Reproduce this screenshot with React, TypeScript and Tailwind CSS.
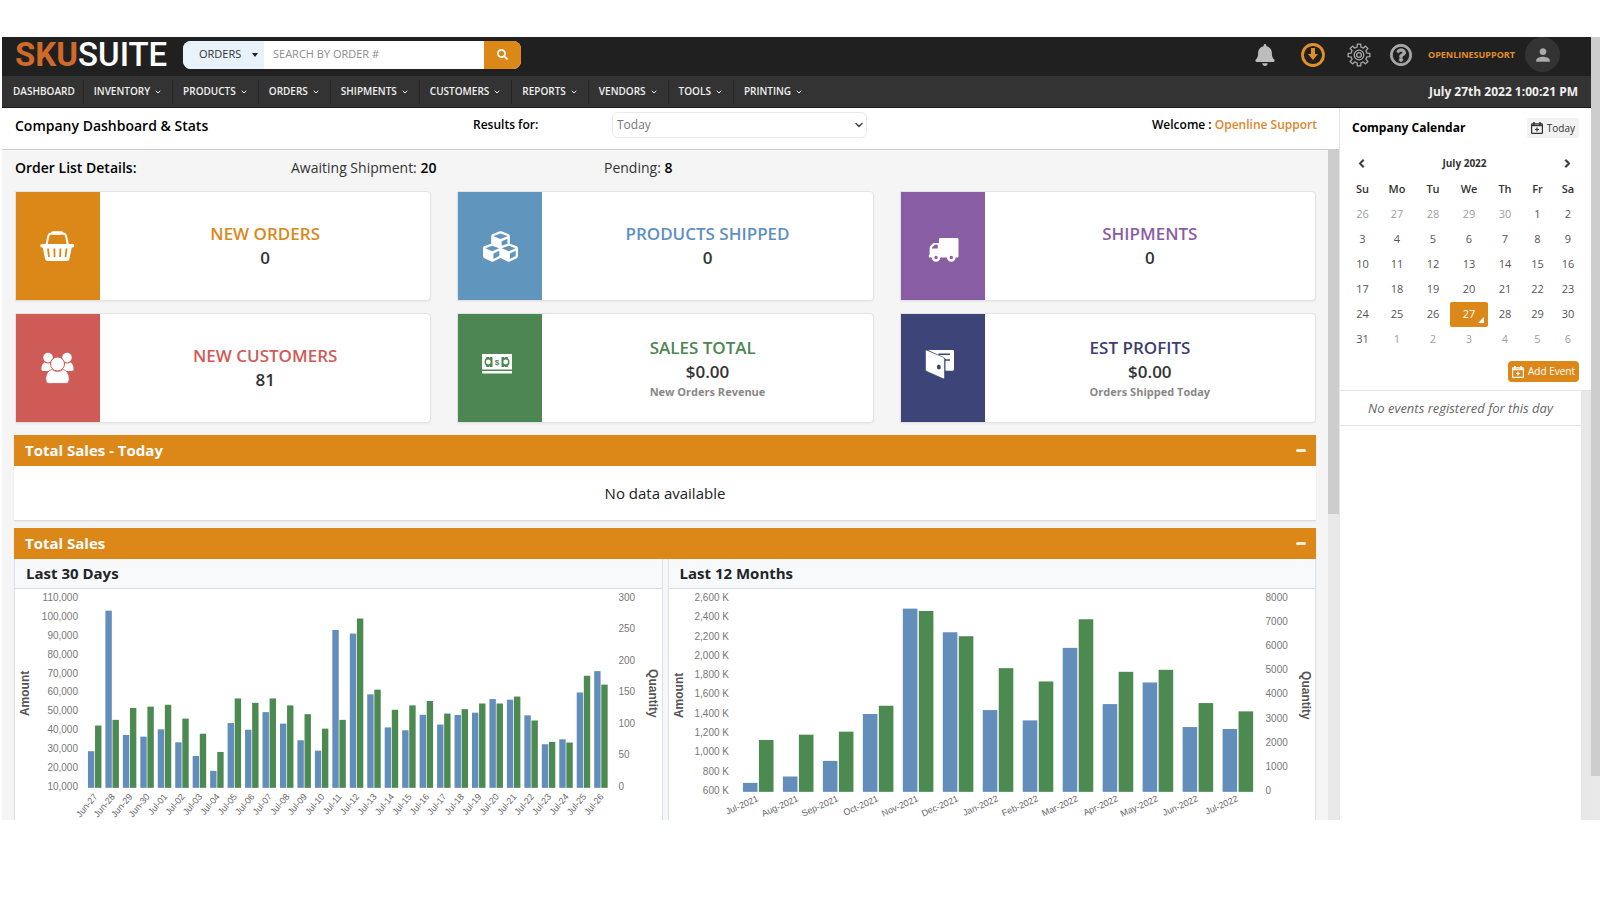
import { useState, type ReactNode } from "react";
import { FaBell, FaChevronLeft, FaChevronRight, FaCubes, FaRegQuestionCircle, FaSearch } from "react-icons/fa";
import { IoMdPerson } from "react-icons/io";
import { ChevronDown } from "lucide-react";

type Bar = [label: string, amount: number, quantity: number];

const NAV = ["INVENTORY", "PRODUCTS", "ORDERS", "SHIPMENTS", "CUSTOMERS", "REPORTS", "VENDORS", "TOOLS", "PRINTING"];

const DAYS: Bar[] = [
  ["Jun-27", 29400, 99],
  ["Jun-28", 103800, 108],
  ["Jun-29", 38000, 127],
  ["Jun-30", 37100, 129],
  ["Jul-01", 41000, 132],
  ["Jul-02", 34100, 110],
  ["Jul-03", 26900, 86],
  ["Jul-04", 19000, 57],
  ["Jul-05", 44300, 142],
  ["Jul-06", 40800, 135],
  ["Jul-07", 50100, 142],
  ["Jul-08", 44000, 131],
  ["Jul-09", 35200, 117],
  ["Jul-10", 29700, 94],
  ["Jul-11", 93600, 108],
  ["Jul-12", 91700, 269],
  ["Jul-13", 59500, 156],
  ["Jul-14", 42000, 124],
  ["Jul-15", 40500, 131],
  ["Jul-16", 48700, 138],
  ["Jul-17", 43500, 118],
  ["Jul-18", 48600, 125],
  ["Jul-19", 49800, 134],
  ["Jul-20", 57000, 134],
  ["Jul-21", 56700, 145],
  ["Jul-22", 48400, 107],
  ["Jul-23", 33100, 73],
  ["Jul-24", 35700, 72],
  ["Jul-25", 60500, 178],
  ["Jul-26", 71800, 164],
];

const MONTHS: Bar[] = [
  ["Jul-2021", 693, 2152],
  ["Aug-2021", 759, 2372],
  ["Sep-2021", 921, 2497],
  ["Oct-2021", 1407, 3572],
  ["Nov-2021", 2500, 7503],
  ["Dec-2021", 2255, 6455],
  ["Jan-2022", 1448, 5131],
  ["Feb-2022", 1341, 4579],
  ["Mar-2022", 2093, 7159],
  ["Apr-2022", 1510, 4979],
  ["May-2022", 1734, 5062],
  ["Jun-2022", 1272, 3683],
  ["Jul-2022", 1252, 3338],
];

const WEEKS = [
  [26, 27, 28, 29, 30, 1, 2],
  [3, 4, 5, 6, 7, 8, 9],
  [10, 11, 12, 13, 14, 15, 16],
  [17, 18, 19, 20, 21, 22, 23],
  [24, 25, 26, 27, 28, 29, 30],
  [31, 1, 2, 3, 4, 5, 6],
];

function BasketIcon() {
  return (
    <svg viewBox="0 0 36 36" className="size-9" fill="none" stroke="#fff">
      <path d="M6.5 17 8.2 8.6C8.6 6.6 9.6 5.6 11.4 5.6H23c1.800 0 2.800 1 3.200 3L27.900 17" strokeWidth="2" />
      <path d="M13 5h8.500" strokeWidth="3.600" strokeLinecap="round" />
      <path d="M2 16h30.500a1.800 1.800 0 0 1 0 3.600l-.8.200-2.300 11.200a2.400 2.400 0 0 1-2.400 2H7.500a2.400 2.400 0 0 1-2.400-2L2.800 19.800 2 19.600A1.800 1.800 0 0 1 2 16Z" fill="#fff" stroke="none" />
      <path d="m8 20.500 1 8.500M14.300 20.500l.3 8.500M20.400 20.500l-.3 8.500M26.500 20.500l-1 8.500" stroke="#db8819" strokeWidth="1.800" />
    </svg>
  );
}

function GroupIcon() {
  return (
    <svg viewBox="0 0 36 36" className="size-9" fill="#fff">
      <circle cx="8" cy="7.600" r="4.800" />
      <circle cx="27" cy="7.600" r="4.800" />
      <path d="M4.500 12.500c2 1.400 5 1.400 7 0L15 16v5H3.500C2 21 1.300 20.200 1.400 19c.2-3 .9-5.500 3.100-6.500ZM30.500 12.500c-2 1.400-5 1.400-7 0L20 16v5h11.500c1.500 0 2.200-.8 2.100-2-.2-3-.9-5.500-3.100-6.500Z" />
      <circle cx="17.500" cy="14" r="7" stroke="#cf5b57" />
      <path d="M12 19.500c3.300 2.600 7.700 2.600 11 0 3.800 1 6.200 4.700 6.200 9.500 0 3-1.200 4.500-3.700 4.500h-16C7 33.500 5.800 32 5.800 29c0-4.800 2.400-8.500 6.200-9.500Z" stroke="#cf5b57" strokeWidth=".8" />
    </svg>
  );
}

function TruckIcon() {
  return (
    <svg viewBox="0 0 36 36" className="size-9">
      <path d="M14 11.500c0-1 .5-1.500 1.500-1.500H32c1 0 1.500.5 1.500 1.500V28c0 1-.5 1.500-1.500 1.500H5c-.8 0-1.200-.4-1.200-1.200v-1c0-.5.300-.8.800-.8V20c0-.8.300-1.400.8-2l2.200-2.200c.6-.6 1.200-.8 2-.8H14Z" fill="#fff" />
      <path d="M7 20.500v-.8l2.800-2.900h3v3.700Z" fill="#895da4" />
      <circle cx="11" cy="29.500" r="3" fill="#895da4" stroke="#fff" strokeWidth="2.600" />
      <circle cx="26.300" cy="29.500" r="3" fill="#895da4" stroke="#fff" strokeWidth="2.600" />
    </svg>
  );
}

function MoneyIcon() {
  return (
    <svg viewBox="0 0 36 36" className="size-9">
      <path d="M0 4h30v15.500H0ZM0 21h30v2.500H0Z" fill="#fff" />
      <path d="M10.500 7v10H8L6.700 15.500A4 4 0 0 1 6.700 8.500L8 7ZM19.500 7v10H22l1.300-1.500a4 4 0 0 0 0-7L22 7Z" fill="#4d8652" />
      <path d="M7 7H4.500C4 9 2.500 9.500 2.500 12S4 15 4.500 17H7M23 7h2.500c.5 2 2 2.500 2 5s-1.500 3-2 5H23" fill="#4d8652" />
      <circle cx="6.300" cy="12" r="2.400" fill="#fff" />
      <circle cx="23.700" cy="12" r="2.400" fill="#fff" />
      <text x="15" y="15" textAnchor="middle" className="fill-[#4d8652] font-['Liberation_Sans',sans-serif] text-[8px] font-bold">
        $
      </text>
    </svg>
  );
}

function WalletIcon() {
  return (
    <svg viewBox="0 0 36 36" className="size-9 overflow-visible">
      <path d="M5 0h22.500c1 0 1.500.5 1.500 1.500V19c0 1.200-.5 1.800-1.500 1.800h-7V8.500L3 0Z" fill="#fff" />
      <path d="M13.500 4.300H25M19 10h6" stroke="#3d4477" strokeWidth="1.600" />
      <path d="M2 .3 17.800 7c1.200.5 1.700 1.200 1.700 2.500v18c0 1-.7 1.500-1.700 1L2 21.500C1 21 .5 20.400.5 19.300V1.500C.5.600 1.100 0 2 .3Z" fill="#fff" stroke="#3d4477" strokeWidth=".6" />
      <ellipse cx="13.800" cy="17" rx="2" ry="2.600" fill="#3d4477" />
    </svg>
  );
}

function CalendarPlusIcon() {
  return (
    <svg viewBox="0 0 12 12" className="size-3" fill="none" stroke="currentColor">
      <rect x=".6" y="1.800" width="10.800" height="9.600" rx=".6" strokeWidth="1.200" />
      <path d="M.5 3.500h11" strokeWidth="1.400" />
      <path d="M3 0v3.200M9 0v3.200" strokeWidth="1.600" />
      <path d="M6 5.500v4M4 7.500h4" strokeWidth="1.200" />
    </svg>
  );
}

function GearIcon() {
  const teeth = Array.from({ length: 8 }, (_, i) => {
    const at = (deg: number, r: number) => {
      const a = ((i * 45 + deg - 90) * Math.PI) / 180;
      return `${(12 + r * Math.cos(a)).toFixed(2)} ${(12 + r * Math.sin(a)).toFixed(2)}`;
    };
    return `${at(-13, 8.2)}L${at(-9, 11)}L${at(9, 11)}L${at(13, 8.2)}`;
  });
  return (
    <svg viewBox="0 0 24 24" className="size-6" fill="none" stroke="#a8a8a8" strokeWidth="1.300" strokeLinejoin="round">
      <path d={`M${teeth.join("L")}Z`} />
      <circle cx="12" cy="12" r="4.800" />
      <circle cx="12" cy="12" r="2.300" />
    </svg>
  );
}

type ChartProps = {
  data: Bar[];
  amountTicks: string[];
  quantityTicks: string[];
  amountRange: [number, number];
  quantityMax: number;
  /** y of the zero line, and x of the first bar */
  base: number;
  start: number;
  pitch: number;
  barWidth: number;
  offset: number;
  amountX: number;
  quantityX: number;
  titleX: [number, number];
  labelAngle: number;
  labelDx: number;
};

function Chart(p: ChartProps) {
  const top = 9;
  const bottom = p.base - 1;
  const span = bottom - top;
  const tickY = (i: number, n: number) => top + (span * i) / (n - 1) + 3;
  const mid = (top + bottom) / 2 + 1;
  return (
    <svg viewBox="0 0 647 240" className="block w-full font-['Liberation_Sans',Arial,sans-serif]">
      <g className="fill-[#777] text-[10px]">
        {p.amountTicks.map((t, i) => (
          <text key={t} x={p.amountX} y={tickY(i, p.amountTicks.length)} textAnchor="end">
            {t}
          </text>
        ))}
        {p.quantityTicks.map((t, i) => (
          <text key={t} x={p.quantityX} y={tickY(i, p.quantityTicks.length)}>
            {t}
          </text>
        ))}
      </g>
      <g className="fill-[#555] text-[12px] font-bold">
        <text textAnchor="middle" transform={`translate(${p.titleX[0]} ${mid}) rotate(-90)`}>
          Amount
        </text>
        <text textAnchor="middle" transform={`translate(${p.titleX[1]} ${mid}) rotate(90)`}>
          Quantity
        </text>
      </g>
      {p.data.map(([label, amount, quantity], i) => {
        const x = p.start + i * p.pitch;
        const [lo, hi] = p.amountRange;
        const a = ((amount - lo) / (hi - lo)) * span;
        const q = (quantity / p.quantityMax) * span;
        return (
          <g key={label}>
            <rect x={x} y={p.base - a} width={p.barWidth} height={a} fill="#638dbb" />
            <rect x={x + p.offset} y={p.base - q} width={p.barWidth} height={q} fill="#4d8a52" />
            <text
              textAnchor="end"
              className="fill-[#666] text-[9px]"
              transform={`translate(${x + p.labelDx} ${p.base + 9}) rotate(${p.labelAngle})`}
            >
              {label}
            </text>
          </g>
        );
      })}
    </svg>
  );
}

type StatCardProps = {
  title: string;
  value: string;
  note?: string;
  bg: string;
  color: string;
  icon: ReactNode;
};

function StatCard({ title, value, note, bg, color, icon }: StatCardProps) {
  return (
    <div className="flex h-[110px] overflow-hidden rounded-r border border-[#e3e3e3] bg-white shadow-xs">
      <div className={`flex w-[84px] items-center justify-center text-white ${bg}`}>{icon}</div>
      <div className="flex flex-1 items-center justify-center">
        <div className="flex flex-col">
          <h3 className={`text-[17px] leading-6 font-semibold ${color}`}>{title}</h3>
          <p className="text-center text-[17px] leading-6 font-semibold text-[#333]">{value}</p>
          {note && <p className="text-[11px] leading-4 font-bold text-[#888]">{note}</p>}
        </div>
      </div>
    </div>
  );
}

function Panel({ title, children }: { title: string; children: ReactNode }) {
  const [open, setOpen] = useState(true);
  return (
    <section className="border-b border-[#ddd] bg-white shadow-xs">
      <header className="flex h-[31px] items-center justify-between bg-[#db8819] pr-[10px] pl-[11px] text-white">
        <h2 className="text-[15px] font-bold">{title}</h2>
        <button type="button" aria-label={`Collapse ${title}`} onClick={() => setOpen(!open)} className="flex h-5 items-center">
          <span className="h-[3px] w-[10px] rounded-xs bg-[#fdf0dc]" />
        </button>
      </header>
      {open && children}
    </section>
  );
}

function TopBar() {
  return (
    <div className="flex h-[39px] items-center bg-[#202020] pr-[31px] pb-1 pl-[13px]">
      <a href="#" className="w-[168px] font-['Roboto',sans-serif] text-[33px] leading-none font-medium text-white">
        <span className="font-bold text-[#cf6a2b]">SKU</span>SUITE
      </a>
      <form className="flex h-7 w-[338px] overflow-hidden rounded-lg bg-white text-[11px]" onSubmit={(e) => e.preventDefault()}>
        <div className="relative w-[81px] bg-[#e8f2fa]">
          <select aria-label="Search type" className="size-full appearance-none pl-4 text-[#333] outline-none">
            <option>ORDERS</option>
            <option>PRODUCTS</option>
          </select>
          <span className="pointer-events-none absolute top-3 right-1.5 border-x-[3px] border-t-4 border-x-transparent border-t-[#222]" />
        </div>
        <input
          aria-label="Search by order number"
          placeholder="SEARCH BY ORDER #"
          className="min-w-0 flex-1 px-[9px] outline-none placeholder:text-[#8c8c8c]"
        />
        <button type="submit" aria-label="Search" className="flex w-[37px] items-center justify-center bg-[#db8819] text-white">
          <FaSearch size={11} />
        </button>
      </form>
      <div className="ml-auto flex items-center">
        <button type="button" aria-label="Notifications" className="mr-[25px] text-[#bdbdbd]">
          <FaBell size={22} />
        </button>
        <button type="button" aria-label="Downloads" className="mr-[22px]">
          <svg viewBox="0 0 24 24" className="size-6">
            <circle cx="12" cy="12" r="10.500" fill="none" stroke="#e0902a" strokeWidth="2.800" />
            <path d="M10 5h4v6h3l-5 6-5-6h3Z" fill="#e0902a" />
          </svg>
        </button>
        <button type="button" aria-label="Settings" className="mr-[19px]">
          <GearIcon />
        </button>
        <button type="button" aria-label="Help" className="mr-4 text-[#a8a8a8]">
          <FaRegQuestionCircle size={22} stroke="currentColor" strokeWidth={18} className="overflow-visible" />
        </button>
        <a href="#" className="mr-[10px] text-[9px] font-bold text-[#e0902a]">
          OPENLINESUPPORT
        </a>
        <span className="flex size-[35px] items-center justify-center rounded-full bg-[#333] text-[#aaa]">
          <IoMdPerson size={18} />
        </span>
      </div>
    </div>
  );
}

function NavBar() {
  return (
    <nav className="flex h-8 items-center border-b border-[#1c1c1c] bg-[#333] pr-[13px] text-[10px] font-semibold text-[#f0f0f0]">
      <a href="#" className="pr-2 pl-[11px]">
        DASHBOARD
      </a>
      {NAV.map((item) => (
        <a key={item} href="#" className="flex h-6 items-center gap-1 border-l border-[#262626] px-[10px]">
          {item}
          <ChevronDown size={8} strokeWidth={3} />
        </a>
      ))}
      <time className="ml-auto text-[12px] font-bold">July 27th 2022 1:00:21 PM</time>
    </nav>
  );
}

function Calendar() {
  return (
    <aside className="flex w-[252px] flex-col border-l border-[#e6e6e6] bg-white">
      <div className="border-b border-[#e3e3e3] pt-[10px] pr-[9px] pb-2 pl-[7px]">
        <div className="flex items-center justify-between pr-[3px] pl-[5px]">
          <h2 className="text-[12px] font-bold text-black">Company Calendar</h2>
          <button type="button" className="flex h-5 items-center gap-1 rounded-xs bg-[#f2f2f2] px-1 text-[10px] text-[#333]">
            <CalendarPlusIcon />
            Today
          </button>
        </div>
        <div className="mt-[13px] flex h-[25px] items-center justify-between px-[10px] text-[#333]">
          <button type="button" aria-label="Previous month">
            <FaChevronLeft size={9} stroke="currentColor" strokeWidth={50} />
          </button>
          <span className="text-[10px] font-bold">July 2022</span>
          <button type="button" aria-label="Next month">
            <FaChevronRight size={9} stroke="currentColor" strokeWidth={50} />
          </button>
        </div>
        <table className="w-full table-fixed text-center text-[11px] text-[#555]">
          <colgroup>
            <col className="w-[31px]" />
            <col className="w-[38px]" />
            <col className="w-[34px]" />
            <col className="w-[38px]" />
            <col className="w-[34px]" />
            <col className="w-[31px]" />
            <col className="w-[30px]" />
          </colgroup>
          <thead>
            <tr className="h-[26px] text-[#333]">
              {["Su", "Mo", "Tu", "We", "Th", "Fr", "Sa"].map((d) => (
                <th key={d} scope="col" className="font-semibold">
                  {d}
                </th>
              ))}
            </tr>
          </thead>
          <tbody>
            {WEEKS.map((week, w) => (
              <tr key={w} className="h-[25px]">
                {week.map((day, d) => {
                  const outside = (w === 0 && day > 7) || (w === 5 && day < 7);
                  if (w === 4 && day === 27) {
                    return (
                      <td key={d} className="relative rounded-xs bg-[#db8819] text-white">
                        {day}
                        <span className="absolute right-1 bottom-1 border-b-[6px] border-l-[6px] border-b-white border-l-transparent" />
                      </td>
                    );
                  }
                  return (
                    <td key={d} className={outside ? "text-[#a0a0a0]" : undefined}>
                      {day}
                    </td>
                  );
                })}
              </tr>
            ))}
          </tbody>
        </table>
        <div className="mt-[9px] flex justify-end pr-[3px]">
          <button type="button" className="flex h-[21px] items-center gap-1 rounded bg-[#db8819] px-1 text-[10px] font-medium text-white">
            <CalendarPlusIcon />
            Add Event
          </button>
        </div>
      </div>
      <div className="flex flex-1">
        <div className="flex-1">
          <p className="border-b border-[#e3e3e3] text-center text-[13px] leading-[34px] text-[#666] italic">No events registered for this day</p>
        </div>
        <div className="w-[10px] bg-[#e8e8e8]" />
      </div>
    </aside>
  );
}

export default function App() {
  return (
    <div className="flex h-screen bg-white pt-[37px] pb-20 pl-0.5 font-['Open_Sans',sans-serif]">
      <div className="flex min-w-0 flex-1 flex-col">
        <TopBar />
        <NavBar />
        <div className="flex min-h-0 flex-1">
          <main className="flex min-w-0 flex-1 flex-col">
            <div className="grid h-[42px] grid-cols-[458fr_139fr_255fr_450fr] items-start border-b border-[#ccc] pt-1 pr-[22px] pl-[13px] text-[12px] font-semibold text-black">
              <h1 className="pt-1 text-[14px] leading-5">Company Dashboard &amp; Stats</h1>
              <label htmlFor="range" className="leading-[26px]">
                Results for:
              </label>
              <div className="relative">
                <select
                  id="range"
                  className="h-[26px] w-full appearance-none rounded-md border border-[#e9e9e9] bg-white px-1 font-normal text-[#777] outline-none"
                >
                  <option>Today</option>
                  <option>Yesterday</option>
                </select>
                <ChevronDown size={12} strokeWidth={3} className="pointer-events-none absolute top-[7px] right-0.5 text-[#444]" />
              </div>
              <p className="text-right leading-[26px]">
                Welcome :{" "}
                <a href="#" className="text-[#db8830]">
                  Openline Support
                </a>
              </p>
            </div>
            <div className="flex min-h-0 flex-1">
              <div className="min-w-0 flex-1 overflow-hidden bg-[#f5f5f5] px-3">
                <div className="grid h-[41px] grid-cols-[276fr_313fr_712fr] items-center pb-1.5 pl-px text-[14px] text-[#333]">
                  <h2 className="font-semibold text-black">Order List Details:</h2>
                  <p>
                    Awaiting Shipment: <b className="font-semibold text-black">20</b>
                  </p>
                  <p>
                    Pending: <b className="font-semibold text-black">8</b>
                  </p>
                </div>
                <div className="grid grid-cols-3 gap-x-[26px] gap-y-3 pl-px">
                  <StatCard title="NEW ORDERS" value="0" bg="bg-[#db8819]" color="text-[#db8819]" icon={<BasketIcon />} />
                  <StatCard title="PRODUCTS SHIPPED" value="0" bg="bg-[#6095bd]" color="text-[#5e8fc2]" icon={<FaCubes size={35} />} />
                  <StatCard title="SHIPMENTS" value="0" bg="bg-[#895da4]" color="text-[#895da4]" icon={<TruckIcon />} />
                  <StatCard title="NEW CUSTOMERS" value="81" bg="bg-[#cf5b57]" color="text-[#cf5b57]" icon={<GroupIcon />} />
                  <StatCard title="SALES TOTAL" value="$0.00" note="New Orders Revenue" bg="bg-[#4d8652]" color="text-[#4d8652]" icon={<MoneyIcon />} />
                  <StatCard title="EST PROFITS" value="$0.00" note="Orders Shipped Today" bg="bg-[#3d4477]" color="text-[#3d3d70]" icon={<WalletIcon />} />
                </div>
                <div className="mt-3 flex flex-col gap-[7px]">
                  <Panel title="Total Sales - Today">
                    <p className="text-center text-[15px] leading-[54px] text-[#222]">No data available</p>
                  </Panel>
                  <Panel title="Total Sales">
                    <div className="grid grid-cols-2 gap-x-[5px] bg-[#f5f7f9]">
                      <div className="border-x border-[#dde1e8] bg-white">
                        <h3 className="h-[30px] border-b border-[#d5dae3] bg-[#f8f9fb] pl-[11px] text-[15px] leading-[29px] font-bold text-[#212529]">
                          Last 30 Days
                        </h3>
                        <Chart
                          data={DAYS}
                          amountTicks={["110,000", "100,000", "90,000", "80,000", "70,000", "60,000", "50,000", "40,000", "30,000", "20,000", "10,000"]}
                          quantityTicks={["300", "250", "200", "150", "100", "50", "0"]}
                          amountRange={[10000, 110000]}
                          quantityMax={300}
                          base={199}
                          start={73}
                          pitch={17.47}
                          barWidth={6.4}
                          offset={7.1}
                          amountX={63}
                          quantityX={604}
                          titleX={[14, 634]}
                          labelAngle={-50}
                          labelDx={10}
                        />
                      </div>
                      <div className="border-x border-[#dde1e8] bg-white">
                        <h3 className="h-[30px] border-b border-[#d5dae3] bg-[#f8f9fb] pl-[11px] text-[15px] leading-[29px] font-bold text-[#212529]">
                          Last 12 Months
                        </h3>
                        <Chart
                          data={MONTHS}
                          amountTicks={["2,600 K", "2,400 K", "2,200 K", "2,000 K", "1,800 K", "1,600 K", "1,400 K", "1,200 K", "1,000 K", "800 K", "600 K"]}
                          quantityTicks={["8000", "7000", "6000", "5000", "4000", "3000", "2000", "1000", "0"]}
                          amountRange={[600, 2600]}
                          quantityMax={8000}
                          base={203}
                          start={74}
                          pitch={40}
                          barWidth={14.6}
                          offset={16}
                          amountX={60}
                          quantityX={597}
                          titleX={[14, 633]}
                          labelAngle={-24}
                          labelDx={16}
                        />
                      </div>
                    </div>
                  </Panel>
                </div>
              </div>
              <div className="w-[11px] bg-[#e9e9e9]">
                <div className="h-[54.3%] bg-[#cdcdcd]" />
              </div>
            </div>
          </main>
          <Calendar />
        </div>
      </div>
      <div className="w-[9px] bg-[#e9e9e9]">
        <div className="h-[94.4%] bg-[#cdcdcd]" />
      </div>
    </div>
  );
}
